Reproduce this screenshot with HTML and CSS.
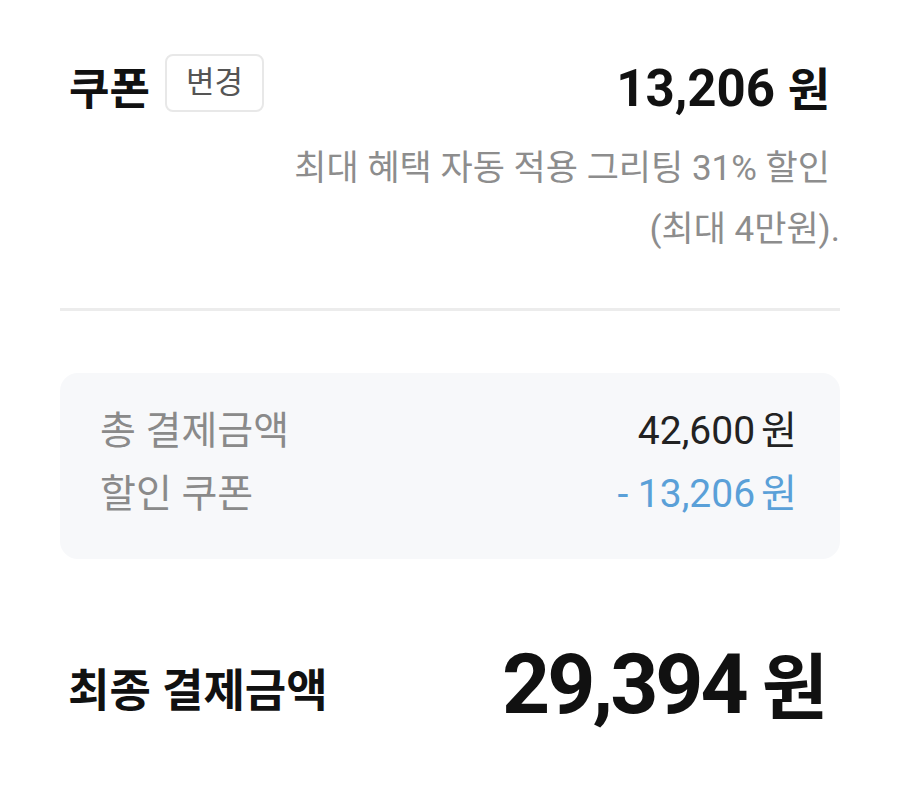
FILE: index.html
```html
<!DOCTYPE html>
<html lang="ko">
<head>
<meta charset="utf-8">
<link rel="stylesheet" href="styles.css">
</head>
<body>
<div class="page">
  <div class="coupon-row">
    <div class="coupon-left">
      <span class="coupon-title">쿠폰</span>
      <span class="change-btn">변경</span>
    </div>
    <div class="coupon-amount">13,206 <span class="won">원</span></div>
  </div>
  <p class="coupon-desc">
    <span class="desc-line first">최대 혜택 자동 적용 그리팅 31% 할인</span>
    <span class="desc-line">(최대 4만원).</span>
  </p>
  <div class="divider"></div>
  <div class="summary">
    <div class="summary-row">
      <span class="summary-label">총 결제금액</span>
      <span class="summary-value">42,600<span class="won">원</span></span>
    </div>
    <div class="summary-row">
      <span class="summary-label">할인 쿠폰</span>
      <span class="summary-value discount">- 13,206<span class="won">원</span></span>
    </div>
  </div>
  <div class="final-row">
    <span class="final-label">최종 결제금액</span>
    <span class="final-amount">29,394<span class="won">원</span></span>
  </div>
</div>
</body>
</html>
```
FILE: styles.css
```css
html, body {
  margin: 0;
  padding: 0;
  background: #ffffff;
}
body {
  font-family: Roboto, "Noto Sans CJK KR", sans-serif;
  color: #111111;
}
.page {
  padding: 59px 60px 0 60px;
}
.coupon-row {
  display: flex;
  justify-content: space-between;
  align-items: center;
  padding: 0 10px 0 9px;
}
.coupon-left {
  display: flex;
  align-items: center;
  gap: 15px;
}
.coupon-title {
  font-size: 44px;
  font-weight: 700;
  color: #111;
  line-height: 60px;
}
.change-btn {
  display: inline-block;
  border: 2px solid #e8e8e8;
  border-radius: 8px;
  padding: 0 19px;
  height: 54px;
  line-height: 54px;
  font-size: 31px;
  color: #555;
  margin-top: -14px;
}
.coupon-amount {
  font-size: 51px;
  font-weight: 700;
  color: #111;
  line-height: 60px;
}
.coupon-amount .won {
  font-size: 46px;
}
.coupon-desc {
  margin: 18px 0 0 0;
  text-align: right;
  font-size: 35px;
  line-height: 61px;
  color: #8d8d8d;
}
.desc-line {
  display: block;
}
.desc-line.first {
  margin-right: 10px;
}
.divider {
  height: 3px;
  background: #ececec;
  margin-top: 48px;
}
.summary {
  margin-top: 62px;
  background: #f7f8fa;
  border-radius: 18px;
  padding: 27px 43px 33px 40px;
}
.summary-row {
  display: flex;
  justify-content: space-between;
  align-items: center;
  line-height: 63px;
  font-size: 39px;
}
.summary-label {
  color: #8a8a8a;
}
.summary-value {
  color: #222;
}
.summary-value .won {
  margin-left: 6px;
}
.summary-value.discount {
  color: #5aa0d8;
}
.final-row {
  display: flex;
  justify-content: space-between;
  align-items: center;
  margin-top: 76px;
  padding: 0 12px 0 8px;
}
.final-label {
  font-size: 45px;
  font-weight: 700;
}
.final-amount {
  font-size: 84px;
  font-weight: 700;
  line-height: 100px;
  letter-spacing: -3px;
}
.final-amount .won {
  margin-left: 16px;
  font-size: 72px;
  letter-spacing: 0;
}
```
